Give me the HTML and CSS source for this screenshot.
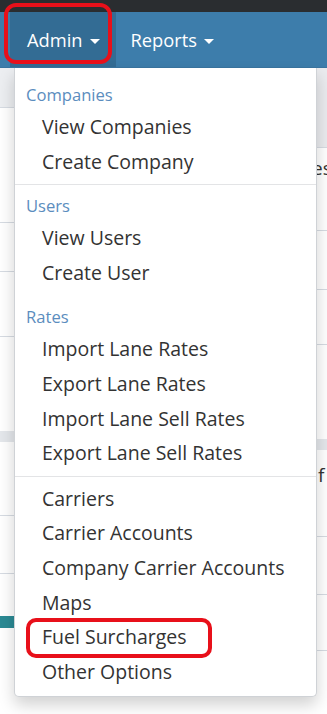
FILE: index.html
```html
<!DOCTYPE html>
<html lang="en">
<head>
    <meta charset="UTF-8">
    <meta name="viewport" content="width=device-width, initial-scale=1.0">
    <title>Admin menu</title>
    <link rel="stylesheet" href="styles.css">
</head>
<body>
    <div class="screen">
        <div class="topbar"></div>

        <nav class="navbar">
            <a class="nav-link active" href="#">Admin <span class="caret"></span></a>
            <a class="nav-link" href="#">Reports <span class="caret"></span></a>
        </nav>

        <div class="page">
            <div class="side side-left">
                <div class="band band-head-left"></div>
                <div class="row" style="height: 115px"></div>
                <div class="row" style="height: 49px"></div>
                <div class="row" style="height: 65px"></div>
                <div class="gap" style="height: 94px"></div>
                <div class="band band-mid"></div>
                <div class="row" style="height: 74px"></div>
                <div class="row" style="height: 58px"></div>
                <div class="gap" style="height: 42px"></div>
                <div class="band band-teal"></div>
            </div>

            <div class="main"></div>

            <div class="side side-right">
                <div class="band band-head-right"></div>
                <div class="row" style="height: 75px"><span class="peek peek-es">es</span></div>
                <div class="row" style="height: 59px"></div>
                <div class="row" style="height: 55px"></div>
                <div class="gap" style="height: 94px"></div>
                <div class="band band-mid"></div>
                <div class="row" style="height: 74px"><span class="peek peek-f">f</span></div>
                <div class="row" style="height: 58px"></div>
                <div class="row" style="height: 56px"></div>
            </div>

            <ul class="dropdown">
                <li class="dropdown-header">Companies</li>
                <li class="item">View Companies</li>
                <li class="item">Create Company</li>
                <li class="divider"></li>
                <li class="dropdown-header">Users</li>
                <li class="item">View Users</li>
                <li class="item">Create User</li>
                <li class="divider divider-faint"></li>
                <li class="dropdown-header">Rates</li>
                <li class="item">Import Lane Rates</li>
                <li class="item">Export Lane Rates</li>
                <li class="item">Import Lane Sell Rates</li>
                <li class="item">Export Lane Sell Rates</li>
                <li class="divider"></li>
                <li class="item">Carriers</li>
                <li class="item">Carrier Accounts</li>
                <li class="item">Company Carrier Accounts</li>
                <li class="item">Maps</li>
                <li class="item highlighted">Fuel Surcharges <span class="callout callout-item"></span></li>
                <li class="item">Other Options</li>
            </ul>
        </div>

        <span class="callout callout-admin"></span>
    </div>
</body>
</html>
```

FILE: styles.css
```css
* {
    margin: 0;
    padding: 0;
    box-sizing: border-box;
}

body {
    font-family: 'Open Sans', 'Liberation Sans', sans-serif;
    background: #ffffff;
    color: #333;
    overflow: hidden;
}

.screen {
    position: relative;
    width: 327px;
    height: 714px;
    overflow: hidden;
}

.topbar {
    height: 12px;
    background: #2a2d30;
}

.navbar {
    display: flex;
    height: 56px;
    padding-left: 10px;
    background: #3d7dab;
    border-bottom: 1px solid #3a75a0;
}

.nav-link {
    display: flex;
    align-items: center;
    gap: 7px;
    padding: 0 16px 0 15px;
    color: #fff;
    font-size: 18.3px;
    text-decoration: none;
}

.nav-link.active {
    background: #336c94;
    padding-left: 17px;
}

.caret {
    display: inline-block;
    width: 0;
    height: 0;
    margin-top: 3px;
    border-top: 5px solid #fff;
    border-left: 5px solid transparent;
    border-right: 5px solid transparent;
}

/* page behind the menu */
.page {
    position: relative;
    display: grid;
    grid-template-columns: 14px 1fr 11px;
    height: 646px;
}

.side .row {
    border-bottom: 1px solid #d6dbe2;
}

.band-head-left {
    height: 40px;
    background: #eceef1;
    border-bottom: 1px solid #d6dbe2;
}

.band-head-right {
    height: 80px;
    background: #eaebee;
    border-bottom: 1px solid #d6dbe2;
}

.band-mid {
    height: 11px;
    background: #e4e7eb;
}

.band-teal {
    height: 12px;
    background: #2b8a94;
}

.peek {
    display: block;
    font-size: 19px;
    line-height: 24px;
    color: #333;
    white-space: nowrap;
}

.peek-es {
    margin: 8px 0 0 -4px;
}

.peek-f {
    margin: 13px 0 0 2px;
}

/* dropdown menu */
.dropdown {
    position: absolute;
    top: 0;
    left: 14px;
    width: 303px;
    list-style: none;
    padding: 11px 0 7px;
    background: #fff;
    border: 1px solid #cfd2d6;
    border-top: none;
    border-radius: 0 0 5px 5px;
    box-shadow: 0 8px 16px rgba(0, 0, 0, 0.18);
    z-index: 2;
}

.dropdown-header {
    padding-left: 11px;
    font-size: 16.6px;
    line-height: 31px;
    color: #5b8dbe;
}

.item {
    position: relative;
    padding-left: 27px;
    font-size: 19.5px;
    line-height: 34.6px;
    color: #333;
    white-space: nowrap;
}

.divider {
    height: 1px;
    margin: 5px 0;
    background: #e3e4e6;
}

.divider-faint {
    background: transparent;
}

/* red annotation boxes */
.callout {
    position: absolute;
    border: 4px solid #e8101a;
    pointer-events: none;
    z-index: 3;
}

.callout-admin {
    top: 3px;
    left: 4px;
    width: 108px;
    height: 61px;
    border-radius: 12px;
}

.callout-item {
    top: -2px;
    left: 11px;
    width: 186px;
    height: 40px;
    border-radius: 10px;
}
```
